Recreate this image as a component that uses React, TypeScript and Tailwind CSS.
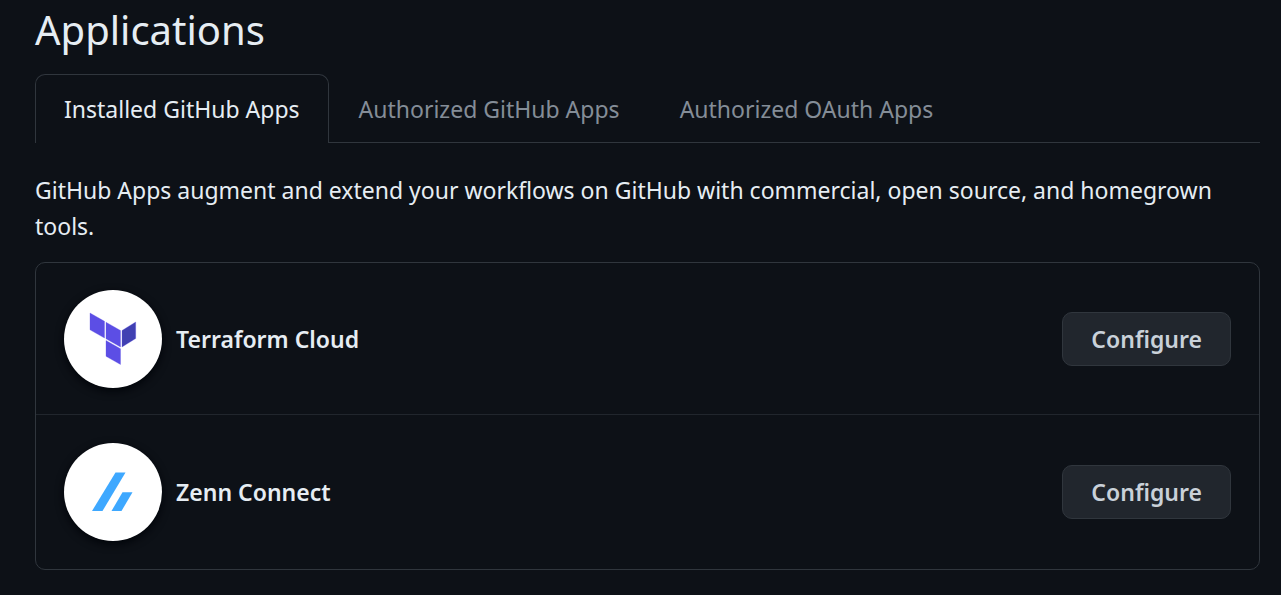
import type { ReactNode } from "react";

const tabs = [
  { label: "Installed GitHub Apps", href: "#installed", current: true },
  { label: "Authorized GitHub Apps", href: "#authorized", current: false },
  { label: "Authorized OAuth Apps", href: "#oauth", current: false },
];

function TerraformLogo() {
  return (
    <svg viewBox="0 0 98 98" className="size-full" aria-hidden="true">
      <g stroke="#5c4ee5" strokeOpacity="0.3" strokeWidth="1">
        <path d="M26 23 40.500 31.300V48L26 39.800Z" fill="#5c4ee5" />
        <path d="M42 32.200 56.500 40.500V57L42 48.800Z" fill="#5c4ee5" />
        <path d="M58 40.500 71.700 32V48.500L58 57Z" fill="#4040b2" />
        <path d="M42 50.500 56.500 58.800V74.500L42 66.300Z" fill="#5c4ee5" />
      </g>
    </svg>
  );
}

function ZennLogo() {
  return (
    <svg viewBox="0 0 98 98" className="size-full" aria-hidden="true">
      <path d="M51.500 29.500H61.500L38.500 68H28Z" fill="#3ea8ff" />
      <path d="M58.500 49.300H68.500L57.500 68H47.500Z" fill="#3ea8ff" />
    </svg>
  );
}

function AppRow({ name, logo }: { name: string; logo: ReactNode }) {
  return (
    <li className="flex items-center border-b border-[#21262d] px-7 pt-[27px] pb-[26px] last:border-b-0 last:py-7">
      <span className="size-[98px] shrink-0 overflow-hidden rounded-full bg-white shadow-[0_3px_8px_#010409]">
        {logo}
      </span>
      <strong className="ml-3.5 flex-1 font-semibold">{name}</strong>
      <button
        type="button"
        aria-label={`Configure ${name}`}
        className="h-[54px] rounded-[10px] border border-[#30363d] bg-[#21262d] px-7 font-semibold text-[#c9d1d9]"
      >
        Configure
      </button>
    </li>
  );
}

export default function App() {
  return (
    <main className="min-h-screen bg-[#0d1117] pr-[21px] pb-6 pl-[35px] font-['Noto_Sans',sans-serif] text-[23px] leading-9 text-[#e6edf3]">
      <h1 className="pb-3.5 text-[40px] leading-[60px]">Applications</h1>
      <nav aria-label="Applications" className="flex border-b border-[#30363d]">
        {tabs.map((tab) => (
          <a
            key={tab.label}
            href={tab.href}
            aria-current={tab.current ? "page" : undefined}
            className={
              tab.current
                ? "-mb-px rounded-t-[10px] border border-b-0 border-[#30363d] bg-[#0d1117] px-7 pt-4 pb-4"
                : "-mb-px border-t border-transparent px-[30px] pt-4 pb-4 text-[#848d97]"
            }
          >
            {tab.label}
          </a>
        ))}
      </nav>
      <p className="mt-[29px]">
        GitHub Apps augment and extend your workflows on GitHub with commercial, open source, and homegrown tools.
      </p>
      <ul className="mt-[18px] rounded-[10px] border border-[#30363d]">
        <AppRow name="Terraform Cloud" logo={<TerraformLogo />} />
        <AppRow name="Zenn Connect" logo={<ZennLogo />} />
      </ul>
    </main>
  );
}
